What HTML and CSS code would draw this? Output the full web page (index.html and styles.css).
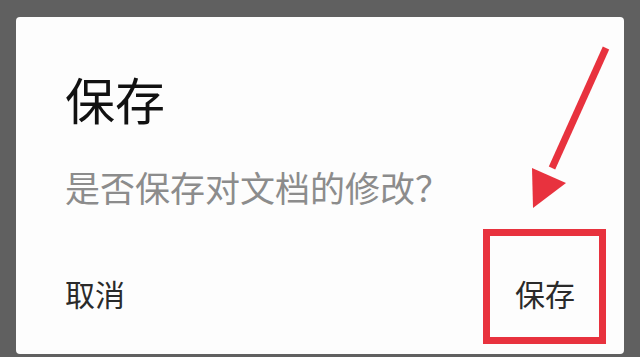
FILE: index.html
```html
<!DOCTYPE html>
<html lang="zh-CN">
<head>
<meta charset="utf-8">
<title>保存</title>
<link rel="stylesheet" href="styles.css">
</head>
<body>
<div class="dialog">
  <h1 class="title">保存</h1>
  <p class="message">是否保存对文档的修改？</p>
  <div class="actions">
    <span class="btn">取消</span>
    <span class="btn btn-save">保存</span>
  </div>
  <div class="highlight"></div>
</div>
<svg class="arrow" width="640" height="357" viewBox="0 0 640 357">
  <line x1="606" y1="48" x2="552" y2="168" stroke="#e8323e" stroke-width="7"/>
  <polygon points="533,208 532,168 566,183" fill="#e8323e"/>
</svg>
</body>
</html>
```
FILE: styles.css
```css
html, body {
  margin: 0;
  padding: 0;
}
body {
  width: 640px;
  height: 357px;
  overflow: hidden;
  background: #606060;
  font-family: "Noto Sans CJK SC", "Noto Sans", sans-serif;
  position: relative;
}
.dialog {
  position: relative;
  margin: 17px 16px 0 16px;
  width: 608px;
  height: 337px;
  box-sizing: border-box;
  background: #fdfdfd;
  border-radius: 4px;
  padding: 56px 49px 0 49px;
}
.title {
  margin: 0;
  font-size: 50px;
  line-height: 50px;
  font-weight: 400;
  color: #111;
}
.message {
  margin: 46px 0 0 0;
  font-size: 35px;
  line-height: 35px;
  color: #8c8c8c;
  white-space: nowrap;
}
.actions {
  margin-top: 74px;
  display: flex;
  justify-content: space-between;
  font-size: 30px;
  line-height: 30px;
  color: #2a2a2a;
}
.highlight {
  position: absolute;
  left: 467px;
  top: 212px;
  width: 123px;
  height: 115px;
  box-sizing: border-box;
  border: 7px solid #e8323e;
}
.arrow {
  position: absolute;
  left: 0;
  top: 0;
}
```
